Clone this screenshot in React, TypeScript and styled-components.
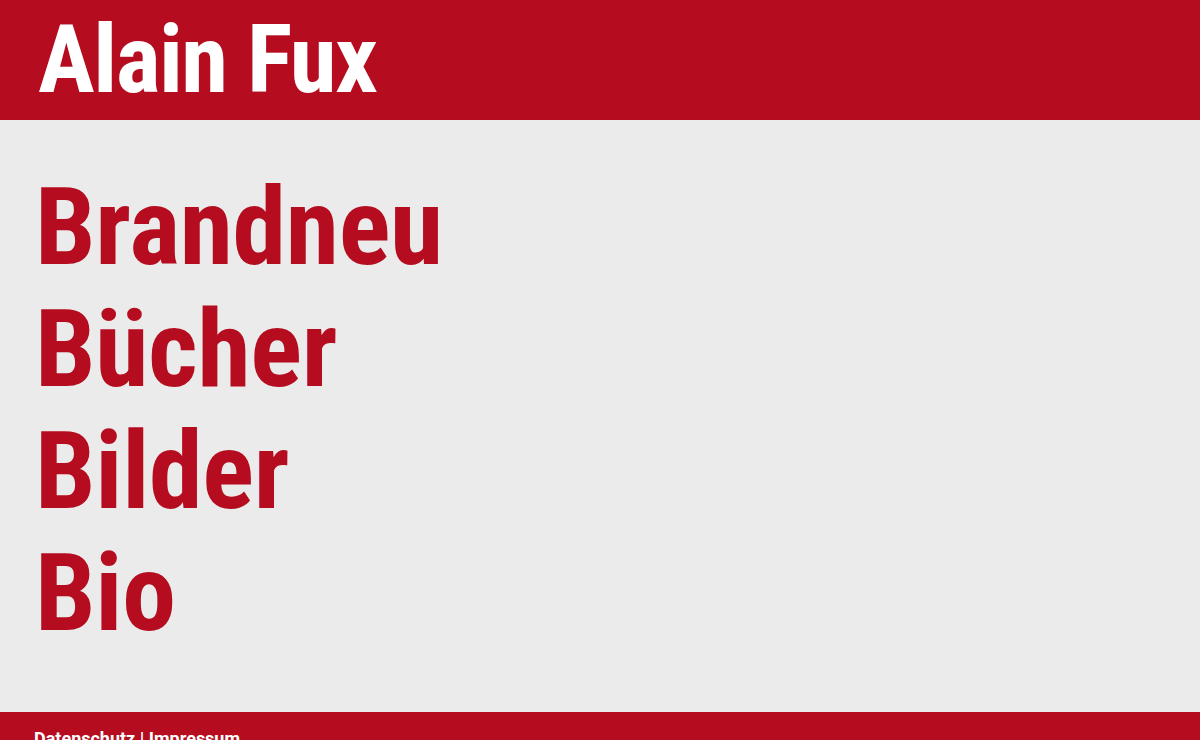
import React from 'react';
import styled, { createGlobalStyle } from 'styled-components';

const GlobalStyle = createGlobalStyle`
  html, body {
    margin: 0;
    padding: 0;
    background-color: #ebebeb;
    font-family: 'Roboto Condensed', Roboto, 'Liberation Sans', sans-serif;
    font-stretch: condensed;
    overflow: hidden;
  }
`;

const Page = styled.div`
  display: flex;
  flex-direction: column;
`;

const Header = styled.header`
  background-color: #b50d1f;
  height: 120px;
  padding: 0 38px;
  box-sizing: border-box;
`;

const SiteTitle = styled.h1`
  margin: 0;
  color: #ffffff;
  font-size: 95px;
  font-weight: 700;
  line-height: 120px;
  letter-spacing: -1.5px;
`;

const Nav = styled.nav`
  height: 592px;
  box-sizing: border-box;
  display: flex;
  flex-direction: column;
  padding: 46px 35px 0;
`;

const NavLink = styled.a`
  color: #b50d1f;
  font-size: 108px;
  font-weight: 700;
  line-height: 122px;
  letter-spacing: -0.3px;
  text-decoration: none;
`;

const Footer = styled.footer`
  background-color: #b50d1f;
  height: 60px;
  padding: 16px 34px 0;
  color: #ffffff;
  font-family: Roboto, 'Liberation Sans', sans-serif;
  font-stretch: normal;
  font-size: 18px;
  font-weight: 700;
`;

export default function App() {
  return (
    <Page>
      <GlobalStyle />
      <Header>
        <SiteTitle>Alain Fux</SiteTitle>
      </Header>
      <Nav>
        <NavLink href="#">Brandneu</NavLink>
        <NavLink href="#">Bücher</NavLink>
        <NavLink href="#">Bilder</NavLink>
        <NavLink href="#">Bio</NavLink>
      </Nav>
      <Footer>Datenschutz | Impressum</Footer>
    </Page>
  );
}
